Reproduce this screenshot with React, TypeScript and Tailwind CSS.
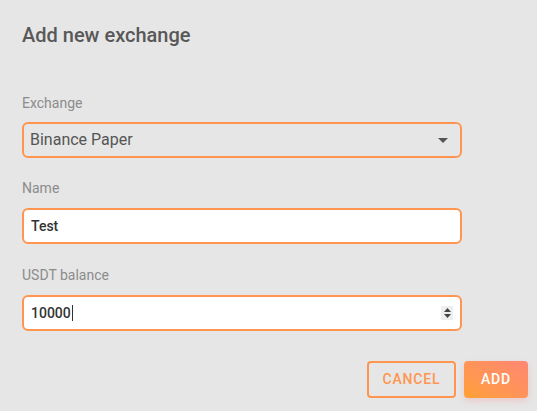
import React from "react"

function Label({ children }: { children: React.ReactNode }) {
  return (
    <div className="text-[14px] leading-[20px] text-[#8c8c8c]">{children}</div>
  )
}

export default function App() {
  return (
    <div
      className="min-h-screen w-full bg-[#e6e6e6] px-[22px] pt-[21px]"
      style={{ fontFamily: "Roboto, 'Liberation Sans', sans-serif" }}
    >
      <h1 className="text-[20px] leading-[28px] font-medium text-[#585858]">
        Add new exchange
      </h1>

      <div className="mt-[44px] w-[440px] flex flex-col">
        <Label>Exchange</Label>
        <div className="mt-[9px] h-[36px] rounded-[6px] border-2 border-[#ff9550] flex items-center justify-between pl-[6px] pr-[12px]">
          <span className="text-[16px] text-[#555555]">Binance Paper</span>
          <svg width="10" height="5" viewBox="0 0 10 5">
            <path d="M0 0 L10 0 L5 5 Z" fill="#555555" />
          </svg>
        </div>

        <div className="mt-[20px]">
          <Label>Name</Label>
        </div>
        <div className="mt-[10px] h-[36px] rounded-[6px] border-2 border-[#ff9550] bg-white flex items-center px-[7px]">
          <span className="text-[14px] font-medium text-[#333333]">Test</span>
        </div>

        <div className="mt-[21px]">
          <Label>USDT balance</Label>
        </div>
        <div className="mt-[10px] h-[36px] rounded-[6px] border-2 border-[#ff9550] bg-white flex items-center justify-between pl-[7px] pr-[7px]">
          <span className="flex items-center text-[14px] font-medium text-[#333333]">
            10000
            <span className="ml-[1px] inline-block w-px h-[16px] bg-[#333333]" />
          </span>
          <span className="w-[12px] h-[14px] bg-[#eeeeee] flex flex-col items-center justify-center gap-[2px]">
            <svg width="7" height="4" viewBox="0 0 7 4">
              <path d="M0 4 L7 4 L3.5 0 Z" fill="#444444" />
            </svg>
            <svg width="7" height="4" viewBox="0 0 7 4">
              <path d="M0 0 L7 0 L3.5 4 Z" fill="#444444" />
            </svg>
          </span>
        </div>
      </div>

      <div className="mt-[30px] flex justify-end gap-[8px] pr-[9px] -mr-[22px]">
        <button className="h-[37px] w-[89px] rounded-[4px] border-2 border-[#ff9550] text-[14px] font-medium tracking-[0.06em] text-[#ff9550]">
          CANCEL
        </button>
        <button className="h-[37px] w-[64px] rounded-[4px] bg-gradient-to-tr from-[#ffa033] to-[#ff8672] text-[14px] font-medium tracking-[0.06em] text-white shadow-[0_3px_6px_rgba(255,120,120,0.25)]">
          ADD
        </button>
      </div>
    </div>
  )
}
